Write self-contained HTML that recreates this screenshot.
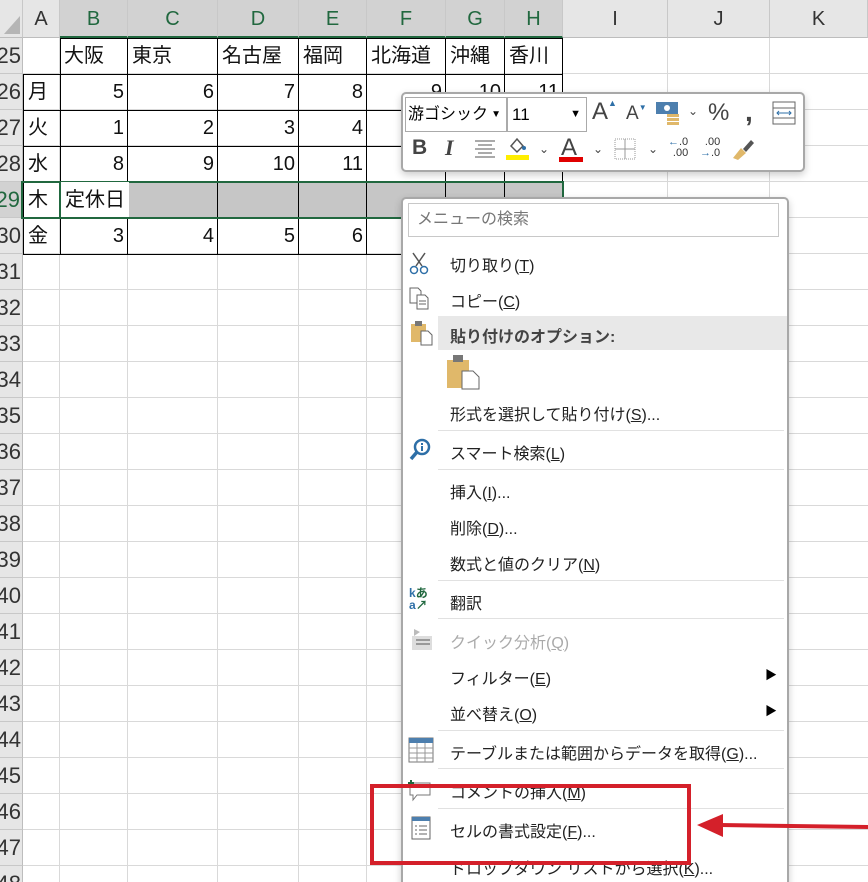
<!DOCTYPE html>
<html><head><meta charset="utf-8"><style>
*{margin:0;padding:0;box-sizing:border-box}
html,body{width:868px;height:882px;overflow:hidden}
body{background:#fff;position:relative;font-family:"Liberation Sans","Noto Sans CJK JP",sans-serif}
.a{position:absolute}
.grid{position:absolute;left:0;top:38px;width:868px;height:844px;background:repeating-linear-gradient(to bottom,transparent 0,transparent 35px,#d9d9d9 35px,#d9d9d9 36px)}
.v{position:absolute;top:0;width:1px;height:882px;background:#d9d9d9}
.hd{position:absolute;top:0;height:38px;background:#e6e6e6;border-right:1px solid #c8c8c8;border-bottom:1px solid #bdbdbd;font-size:20px;color:#333;text-align:center;line-height:38px}
.hs{background:#d2d2d2;color:#21683f;border-bottom:2px solid #21683f}
.rh{position:absolute;left:0;width:23px;height:36px;background:#e6e6e6;border-bottom:1px solid #c8c8c8;border-right:1px solid #bdbdbd;overflow:hidden}
.rh span{position:absolute;right:1px;top:0;font-size:22px;color:#333;line-height:36px;white-space:nowrap}
.c{position:absolute;height:36px;font-size:20px;line-height:36px;color:#111;white-space:nowrap;padding:0 4px}
.r{text-align:right}
.bl{position:absolute;background:#000}
.mi{position:absolute;left:450px;font-size:16px;color:#222;white-space:nowrap}
.sep{position:absolute;left:438px;width:346px;height:1px;background:#e1e1e1}
u{text-decoration:underline}
</style></head><body>
<div class="grid"></div>
<div class="v" style="left:59px"></div><div class="v" style="left:127px"></div><div class="v" style="left:217px"></div><div class="v" style="left:298px"></div><div class="v" style="left:366px"></div><div class="v" style="left:445px"></div><div class="v" style="left:504px"></div><div class="v" style="left:562px"></div><div class="v" style="left:667px"></div><div class="v" style="left:769px"></div>

<div class="hd" style="left:0;width:23px"><svg width="20" height="34" style="position:absolute;left:2px;top:2px"><polygon points="18,14 18,32 2,32" fill="#b5b5b5"/></svg></div>
<div class="hd" style="left:23px;width:37px">A</div>
<div class="hd hs" style="left:60px;width:68px">B</div>
<div class="hd hs" style="left:128px;width:90px">C</div>
<div class="hd hs" style="left:218px;width:81px">D</div>
<div class="hd hs" style="left:299px;width:68px">E</div>
<div class="hd hs" style="left:367px;width:79px">F</div>
<div class="hd hs" style="left:446px;width:59px">G</div>
<div class="hd hs" style="left:505px;width:58px">H</div>
<div class="hd" style="left:563px;width:105px">I</div>
<div class="hd" style="left:668px;width:102px">J</div>
<div class="hd" style="left:770px;width:98px">K</div>

<div class="rh" style="top:38px"><span>25</span></div><div class="rh" style="top:74px"><span>26</span></div><div class="rh" style="top:110px"><span>27</span></div><div class="rh" style="top:146px"><span>28</span></div>
<div class="rh" style="top:182px;background:#d2d2d2;border-right:2px solid #21683f"><span style="color:#21683f">29</span></div>
<div class="rh" style="top:218px"><span>30</span></div><div class="rh" style="top:254px"><span>31</span></div><div class="rh" style="top:290px"><span>32</span></div><div class="rh" style="top:326px"><span>33</span></div><div class="rh" style="top:362px"><span>34</span></div><div class="rh" style="top:398px"><span>35</span></div><div class="rh" style="top:434px"><span>36</span></div><div class="rh" style="top:470px"><span>37</span></div><div class="rh" style="top:506px"><span>38</span></div><div class="rh" style="top:542px"><span>39</span></div><div class="rh" style="top:578px"><span>40</span></div><div class="rh" style="top:614px"><span>41</span></div><div class="rh" style="top:650px"><span>42</span></div><div class="rh" style="top:686px"><span>43</span></div><div class="rh" style="top:722px"><span>44</span></div><div class="rh" style="top:758px"><span>45</span></div><div class="rh" style="top:794px"><span>46</span></div><div class="rh" style="top:830px"><span>47</span></div><div class="rh" style="top:866px"><span>48</span></div>

<div class="a" style="left:128px;top:183px;width:435px;height:35px;background:#c6c6c6"></div>
<div class="bl" style="left:60px;top:38px;width:503px;height:1px"></div>
<div class="bl" style="left:23px;top:74px;width:540px;height:1px"></div>
<div class="bl" style="left:23px;top:110px;width:540px;height:1px"></div>
<div class="bl" style="left:23px;top:146px;width:540px;height:1px"></div>
<div class="bl" style="left:23px;top:182px;width:540px;height:1px"></div>
<div class="bl" style="left:23px;top:218px;width:540px;height:1px"></div>
<div class="bl" style="left:23px;top:254px;width:390px;height:1px"></div>
<div class="bl" style="left:23px;top:74px;width:1px;height:180px"></div>
<div class="bl" style="left:60px;top:38px;width:1px;height:216px"></div>
<div class="bl" style="left:127px;top:38px;width:1px;height:216px"></div>
<div class="bl" style="left:217px;top:38px;width:1px;height:216px"></div>
<div class="bl" style="left:298px;top:38px;width:1px;height:216px"></div>
<div class="bl" style="left:366px;top:38px;width:1px;height:216px"></div>
<div class="bl" style="left:445px;top:38px;width:1px;height:216px"></div>
<div class="bl" style="left:504px;top:38px;width:1px;height:216px"></div>
<div class="bl" style="left:562px;top:38px;width:1px;height:216px"></div>
<div class="a" style="left:21px;top:181px;width:543px;height:38px;border:2px solid #21683f"></div>
<div class="a" style="left:59px;top:183px;width:2px;height:35px;background:#21683f"></div>

<div class="c" style="left:60px;top:38px">大阪</div><div class="c" style="left:128px;top:38px">東京</div><div class="c" style="left:218px;top:38px">名古屋</div><div class="c" style="left:299px;top:38px">福岡</div><div class="c" style="left:367px;top:38px">北海道</div><div class="c" style="left:446px;top:38px">沖縄</div><div class="c" style="left:505px;top:38px">香川</div>
<div class="c" style="left:24px;top:74px">月</div><div class="c" style="left:24px;top:110px">火</div><div class="c" style="left:24px;top:146px">水</div><div class="c" style="left:24px;top:182px">木</div><div class="c" style="left:24px;top:218px">金</div>
<div class="c r" style="left:60px;width:68px;top:74px">5</div><div class="c r" style="left:128px;width:90px;top:74px">6</div><div class="c r" style="left:218px;width:81px;top:74px">7</div><div class="c r" style="left:299px;width:68px;top:74px">8</div><div class="c r" style="left:367px;width:79px;top:74px">9</div><div class="c r" style="left:446px;width:59px;top:74px">10</div><div class="c r" style="left:505px;width:58px;top:74px">11</div>
<div class="c r" style="left:60px;width:68px;top:110px">1</div><div class="c r" style="left:128px;width:90px;top:110px">2</div><div class="c r" style="left:218px;width:81px;top:110px">3</div><div class="c r" style="left:299px;width:68px;top:110px">4</div>
<div class="c r" style="left:60px;width:68px;top:146px">8</div><div class="c r" style="left:128px;width:90px;top:146px">9</div><div class="c r" style="left:218px;width:81px;top:146px">10</div><div class="c r" style="left:299px;width:68px;top:146px">11</div>
<div class="c" style="left:61px;top:182px;background:#fff;height:35px">定休日</div>
<div class="c r" style="left:60px;width:68px;top:218px">3</div><div class="c r" style="left:128px;width:90px;top:218px">4</div><div class="c r" style="left:218px;width:81px;top:218px">5</div><div class="c r" style="left:299px;width:68px;top:218px">6</div>

<!-- mini toolbar -->
<div class="a" style="left:401px;top:92px;width:404px;height:80px;background:#fff;border:2px solid #a8a8a8;border-radius:5px;box-shadow:0 3px 8px rgba(0,0,0,.2)"></div>
<div class="a" style="left:405px;top:97px;width:102px;height:35px;border:1px solid #aaa;font-size:16px;line-height:33px;padding-left:2px">游ゴシック<span style="position:absolute;right:5px;font-size:10px">▼</span></div>
<div class="a" style="left:507px;top:97px;width:80px;height:35px;border:1px solid #aaa;font-size:17px;line-height:33px;padding-left:4px">11<span style="position:absolute;right:5px;font-size:11px">▼</span></div>
<div class="a" style="left:592px;top:98px;font-size:24px;color:#444">A<span style="font-size:9px;color:#2e6fa7;vertical-align:top">▲</span></div>
<div class="a" style="left:626px;top:103px;font-size:19px;color:#444">A<span style="font-size:8px;color:#2e6fa7;vertical-align:top">▼</span></div>
<svg class="a" style="left:655px;top:101px" width="26" height="24"><rect x="1" y="1" width="22" height="12" fill="#4d7fae"/><circle cx="12" cy="7" r="3" fill="#fff"/><rect x="12" y="13" width="12" height="3" fill="#e0b86a"/><rect x="12" y="17" width="12" height="3" fill="#e0b86a"/><rect x="12" y="21" width="12" height="3" fill="#e0b86a"/></svg>
<div class="a" style="left:688px;top:104px;font-size:12px;color:#444">⌄</div>
<div class="a" style="left:708px;top:99px;font-size:24px;color:#444">%</div>
<div class="a" style="left:745px;top:96px;font-size:28px;font-weight:bold;color:#444">,</div>
<svg class="a" style="left:772px;top:101px" width="24" height="24"><rect x="1" y="1" width="22" height="22" fill="none" stroke="#666"/><line x1="1" y1="7" x2="23" y2="7" stroke="#666"/><line x1="1" y1="17" x2="23" y2="17" stroke="#666"/><line x1="5" y1="12" x2="19" y2="12" stroke="#2e6fa7"/><path d="M7 10l-2 2 2 2M17 10l2 2-2 2" fill="none" stroke="#2e6fa7"/></svg>
<div class="a" style="left:412px;top:136px;font-size:21px;font-weight:bold;color:#444">B</div>
<div class="a" style="left:445px;top:135px;font-size:22px;font-style:italic;font-weight:bold;color:#444;font-family:'Liberation Serif',serif">I</div>
<svg class="a" style="left:474px;top:139px" width="22" height="20"><g stroke="#555"><line x1="1" y1="2" x2="21" y2="2"/><line x1="4" y1="6" x2="18" y2="6"/><line x1="1" y1="10" x2="21" y2="10"/><line x1="4" y1="14" x2="18" y2="14"/><line x1="1" y1="18" x2="21" y2="18"/></g></svg>
<svg class="a" style="left:505px;top:136px" width="24" height="24"><path d="M6 10l6-7 6 7-6 6z" fill="none" stroke="#555" stroke-width="1.5"/><circle cx="19" cy="12" r="2" fill="#2e6fa7"/><rect x="1" y="19" width="23" height="5" fill="#ffee00"/></svg>
<div class="a" style="left:539px;top:142px;font-size:12px;color:#444">⌄</div>
<div class="a" style="left:561px;top:134px;font-size:24px;color:#444">A</div>
<div class="a" style="left:559px;top:157px;width:24px;height:5px;background:#e00000"></div>
<div class="a" style="left:593px;top:142px;font-size:12px;color:#444">⌄</div>
<svg class="a" style="left:614px;top:138px" width="22" height="22"><rect x="1" y="1" width="20" height="20" fill="none" stroke="#999" stroke-dasharray="1,1"/><line x1="11" y1="1" x2="11" y2="21" stroke="#999"/><line x1="1" y1="11" x2="21" y2="11" stroke="#999"/></svg>
<div class="a" style="left:648px;top:142px;font-size:12px;color:#444">⌄</div>
<div class="a" style="left:668px;top:137px;font-size:11px;line-height:11px;color:#333;text-align:right"><span style="color:#2e6fa7">←</span>.0<br>.00</div>
<div class="a" style="left:700px;top:137px;font-size:11px;line-height:11px;color:#333;text-align:right">.00<br><span style="color:#2e6fa7">→</span>.0</div>
<svg class="a" style="left:731px;top:138px" width="24" height="22"><path d="M2 20l8-10 5 5-8 7z" fill="#e0b86a"/><path d="M12 11l8-9 3 3-8 9z" fill="#555"/></svg>

<!-- context menu -->
<div class="a" style="left:401px;top:197px;width:388px;height:700px;background:#fff;border:2px solid #a8a8a8;border-radius:5px;box-shadow:0 3px 8px rgba(0,0,0,.2)"></div>
<div class="a" style="left:408px;top:203px;width:371px;height:34px;border:1px solid #c8c8c8;font-size:16px;color:#777;line-height:32px;padding-left:8px">メニューの検索</div>
<div class="a" style="left:438px;top:316px;width:349px;height:34px;background:#e8e8e8"></div>
<div class="sep" style="top:430px"></div><div class="sep" style="top:469px"></div><div class="sep" style="top:580px"></div><div class="sep" style="top:618px"></div><div class="sep" style="top:730px"></div><div class="sep" style="top:768px"></div><div class="sep" style="top:808px"></div>

<div class="mi" style="top:252px">切り取り(<u>T</u>)</div>
<div class="mi" style="top:288px">コピー(<u>C</u>)</div>
<div class="mi" style="top:323px;font-weight:bold;font-size:16px;color:#444">貼り付けのオプション:</div>
<div class="mi" style="top:401px">形式を選択して貼り付け(<u>S</u>)...</div>
<div class="mi" style="top:440px">スマート検索(<u>L</u>)</div>
<div class="mi" style="top:479px">挿入(<u>I</u>)...</div>
<div class="mi" style="top:515px">削除(<u>D</u>)...</div>
<div class="mi" style="top:551px">数式と値のクリア(<u>N</u>)</div>
<div class="mi" style="top:590px">翻訳</div>
<div class="mi" style="top:629px;color:#aaa">クイック分析(<u>Q</u>)</div>
<div class="mi" style="top:665px">フィルター(<u>E</u>)</div>
<div class="mi" style="top:701px">並べ替え(<u>O</u>)</div>
<div class="mi" style="top:740px">テーブルまたは範囲からデータを取得(<u>G</u>)...</div>
<div class="mi" style="top:779px">コメントの挿入(<u>M</u>)</div>
<div class="mi" style="top:818px">セルの書式設定(<u>F</u>)...</div>
<div class="mi" style="top:855px">ドロップダウン リストから選択(<u>K</u>)...</div>
<div class="a" style="left:765px;top:666px;font-size:12px">▶</div>
<div class="a" style="left:765px;top:702px;font-size:12px">▶</div>

<svg class="a" style="left:408px;top:251px" width="22" height="24"><path d="M5 2l9 13M17 2L8 15" stroke="#555" stroke-width="1.5"/><circle cx="6" cy="19" r="3.5" fill="none" stroke="#2e6fa7" stroke-width="1.5"/><circle cx="16" cy="19" r="3.5" fill="none" stroke="#2e6fa7" stroke-width="1.5"/></svg>
<svg class="a" style="left:409px;top:287px" width="22" height="24"><path d="M1 1h8l3 3v12H1z" fill="#fff" stroke="#666"/><path d="M8 8h8l3 3v11H8z" fill="#fff" stroke="#666"/><g stroke="#666"><line x1="10" y1="14" x2="17" y2="14"/><line x1="10" y1="17" x2="17" y2="17"/></g></svg>
<svg class="a" style="left:410px;top:320px" width="24" height="26"><rect x="1" y="4" width="15" height="18" fill="#e0b86a"/><rect x="5" y="1" width="7" height="5" fill="#777"/><path d="M11 11h7l4 4v10H11z" fill="#fff" stroke="#666"/></svg>
<svg class="a" style="left:446px;top:354px" width="34" height="36"><rect x="1" y="6" width="22" height="28" fill="#e0b86a"/><rect x="7" y="1" width="10" height="7" fill="#777"/><path d="M16 17h11l6 6v12H16z" fill="#fff" stroke="#666"/></svg>
<svg class="a" style="left:409px;top:438px" width="22" height="24"><circle cx="13" cy="9" r="7" fill="none" stroke="#2e6fa7" stroke-width="2.5"/><line x1="8" y1="14" x2="2" y2="21" stroke="#2e6fa7" stroke-width="3.5"/><rect x="12" y="8" width="2" height="5" fill="#2e6fa7"/><rect x="12" y="5" width="2" height="2" fill="#2e6fa7"/></svg>
<div class="a" style="left:409px;top:587px;font-size:12px;line-height:12px;color:#2e6fa7;font-weight:bold">k<span style="color:#21683f">あ</span><br>a<span style="color:#21683f">↗</span></div>
<svg class="a" style="left:410px;top:628px" width="24" height="24"><rect x="2" y="8" width="20" height="14" fill="#ddd"/><g stroke="#999" stroke-width="2"><line x1="6" y1="12" x2="20" y2="12"/><line x1="6" y1="16" x2="20" y2="16"/></g><path d="M4 1l6 3-6 4z" fill="#bbb"/></svg>
<svg class="a" style="left:408px;top:737px" width="26" height="26"><rect x="1" y="1" width="24" height="24" fill="#fff" stroke="#777"/><rect x="1" y="1" width="24" height="5" fill="#4d7fae"/><g stroke="#999"><line x1="1" y1="11" x2="25" y2="11"/><line x1="1" y1="16" x2="25" y2="16"/><line x1="1" y1="21" x2="25" y2="21"/><line x1="9" y1="6" x2="9" y2="25"/><line x1="17" y1="6" x2="17" y2="25"/></g></svg>
<svg class="a" style="left:408px;top:779px" width="26" height="24"><path d="M2 4h20v12H9l-4 5v-5H2z" fill="#fff" stroke="#777"/><path d="M3 1v6M0 4h6" stroke="#21683f" stroke-width="2"/></svg>
<svg class="a" style="left:411px;top:816px" width="20" height="24"><rect x="1" y="1" width="18" height="22" fill="#fff" stroke="#666"/><rect x="1" y="1" width="18" height="4" fill="#4d7fae"/><g stroke="#666"><line x1="4" y1="10" x2="6" y2="10"/><line x1="8" y1="10" x2="16" y2="10"/><line x1="4" y1="14" x2="6" y2="14"/><line x1="8" y1="14" x2="16" y2="14"/><line x1="4" y1="18" x2="6" y2="18"/><line x1="8" y1="18" x2="16" y2="18"/></g></svg>

<div class="a" style="left:370px;top:784px;width:321px;height:81px;border:4px solid #d4202a"></div>
<svg class="a" style="left:695px;top:810px" width="173" height="32"><line x1="25" y1="15" x2="173" y2="17" stroke="#d4202a" stroke-width="4"/><path d="M2 15L28 4L28 27z" fill="#d4202a"/></svg>
</body></html>
